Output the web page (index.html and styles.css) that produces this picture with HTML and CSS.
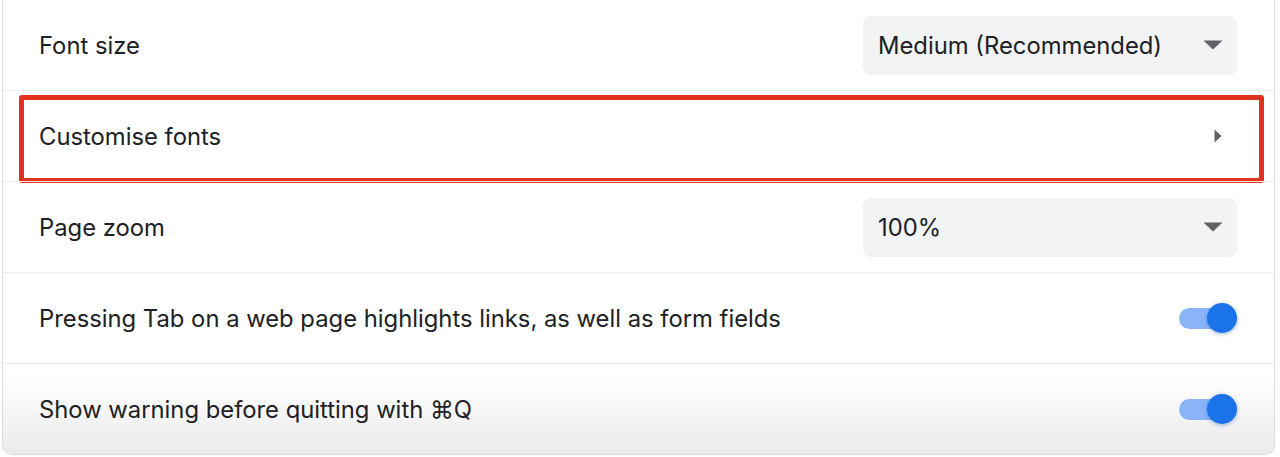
FILE: index.html
```html
<!DOCTYPE html>
<html lang="en">
<head>
<meta charset="utf-8">
<title>Appearance settings</title>
<link rel="stylesheet" href="styles.css">
</head>
<body>
<div class="card">
  <div class="row">
    <span class="label">Font size</span>
    <div class="select">
      <span>Medium (Recommended)</span>
      <svg class="caret" width="20" height="10" viewBox="0 0 20 10"><path d="M0.5 0.5h19L10 9.5z" fill="#5f6368"/></svg>
    </div>
  </div>
  <div class="row highlighted">
    <span class="label">Customise fonts</span>
    <svg class="chevron" width="8" height="14" viewBox="0 0 8 14"><path d="M0.5 0.5L7.5 7L0.5 13.5z" fill="#5f6368"/></svg>
  </div>
  <div class="row">
    <span class="label">Page zoom</span>
    <div class="select">
      <span>100%</span>
      <svg class="caret" width="20" height="10" viewBox="0 0 20 10"><path d="M0.5 0.5h19L10 9.5z" fill="#5f6368"/></svg>
    </div>
  </div>
  <div class="row">
    <span class="label">Pressing Tab on a web page highlights links, as well as form fields</span>
    <div class="toggle"><span class="knob"></span></div>
  </div>
  <div class="row last">
    <span class="label">Show warning before quitting with ⌘Q</span>
    <div class="toggle"><span class="knob"></span></div>
  </div>
</div>
</body>
</html>
```
FILE: styles.css
```css
html, body {
  margin: 0;
  padding: 0;
  background: #ffffff;
}
body {
  font-family: Inter, "Noto Sans", "DejaVu Sans", sans-serif;
  color: #202124;
  height: 457px;
  overflow: hidden;
}
.card {
  margin-left: 2px;
  width: 1271px;
  border: 1px solid #dcdcdc;
  border-top: none;
  border-radius: 0 0 10px 10px;
  background: #fff;
  overflow: hidden;
}
.row {
  position: relative;
  height: 90px;
  display: flex;
  align-items: center;
  justify-content: space-between;
  padding: 0 37px 0 36px;
  border-top: 1px solid #ececec;
}
.row:first-child {
  border-top: none;
}
.label {
  font-size: 23.8px;
}
.select {
  width: 374px;
  height: 59px;
  box-sizing: border-box;
  background: #f1f3f4;
  border-radius: 8px;
  display: flex;
  align-items: center;
  justify-content: space-between;
  padding: 0 14px 0 15px;
  font-size: 23.8px;
}
.caret {
  display: block;
}
.chevron {
  display: block;
  margin-right: 15px;
}
.highlighted::after {
  content: "";
  position: absolute;
  left: 16px;
  right: 10px;
  top: 4px;
  bottom: -2px;
  border: 5px solid #e0321c;
  border-radius: 3px;
  pointer-events: none;
}
.toggle {
  position: relative;
  width: 58px;
  height: 30px;
  display: flex;
  align-items: center;
}
.toggle::before {
  content: "";
  display: block;
  width: 50px;
  height: 21px;
  border-radius: 11px;
  background: #8ab4f8;
}
.knob {
  position: absolute;
  right: 0;
  top: 0;
  width: 30px;
  height: 30px;
  border-radius: 50%;
  background: #1a73e8;
  box-shadow: 0 1px 4px rgba(26, 80, 180, 0.45);
}
.last {
  background: linear-gradient(#ffffff 15%, #eaeaea 100%);
}
```
